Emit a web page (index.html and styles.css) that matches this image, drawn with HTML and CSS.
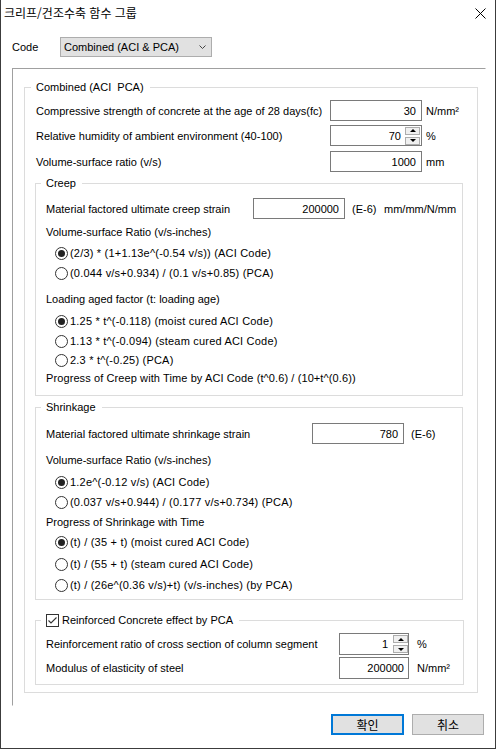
FILE: index.html
```html
<!DOCTYPE html>
<html lang="ko">
<head>
<meta charset="utf-8">
<title>크리프/건조수축 함수 그룹</title>
<link rel="stylesheet" href="styles.css">
</head>
<body>
<div class="window">
  <div class="titlebar">
    <span class="title">크리프/건조수축 함수 그룹</span>
    <svg class="close" width="11" height="11" viewBox="0 0 11 11"><path d="M0.5 0.5 L10.5 10.5 M10.5 0.5 L0.5 10.5" stroke="#000" stroke-width="1" fill="none"/></svg>
  </div>

  <div class="code-row">
    <span class="code-label">Code</span>
    <div class="select">
      <span>Combined (ACI &amp; PCA)</span>
      <svg width="7" height="4" viewBox="0 0 7 4"><polyline points="0.5,0.5 3.5,3.5 6.5,0.5" stroke="#444" stroke-width="1" fill="none"/></svg>
    </div>
  </div>

  <div class="panel">
    <fieldset class="grp combined">
      <legend>Combined (ACI&nbsp; PCA)</legend>

      <div class="row r-c1">
        <span class="lbl w294">Compressive strength of concrete at the age of 28 days(fc)</span>
        <div class="field w92"><span class="val">30</span></div>
        <span class="unit">N/mm²</span>
      </div>
      <div class="row r-c2">
        <span class="lbl w294">Relative humidity of ambient environment (40-100)</span>
        <div class="field w92 spinfield">
          <span class="val sv1">70</span>
          <div class="spin"><span class="sb up"></span><span class="sb down"></span></div>
        </div>
        <span class="unit">%</span>
      </div>
      <div class="row r-c3">
        <span class="lbl w294">Volume-surface ratio (v/s)</span>
        <div class="field w92"><span class="val">1000</span></div>
        <span class="unit">mm</span>
      </div>

      <fieldset class="grp sub creep">
        <legend>Creep</legend>
        <div class="row r-k1">
          <span class="lbl w207">Material factored ultimate creep strain</span>
          <div class="field w92"><span class="val">200000</span></div>
          <span class="unit u7 e6">(E-6)</span>
          <span class="unit">mm/mm/N/mm</span>
        </div>
        <div class="line m6">Volume-surface Ratio (v/s-inches)</div>
        <div class="radio m7"><span class="rb on"></span><span class="rt">(2/3) * (1+1.13e^(-0.54 v/s)) (ACI Code)</span></div>
        <div class="radio m6"><span class="rb"></span><span class="rt">(0.044 v/s+0.934) / (0.1 v/s+0.85) (PCA)</span></div>
        <div class="line m12">Loading aged factor (t: loading age)</div>
        <div class="radio m8"><span class="rb on"></span><span class="rt">1.25 * t^(-0.118) (moist cured ACI Code)</span></div>
        <div class="radio m6"><span class="rb"></span><span class="rt">1.13 * t^(-0.094) (steam cured ACI Code)</span></div>
        <div class="radio m5"><span class="rb"></span><span class="rt">2.3 * t^(-0.25) (PCA)</span></div>
        <div class="line m4 wide">Progress of Creep with Time by ACI Code (t^0.6) / (10+t^(0.6))</div>
      </fieldset>

      <fieldset class="grp sub shrink">
        <legend>Shrinkage</legend>
        <div class="row r-s1">
          <span class="lbl w266">Material factored ultimate shrinkage strain</span>
          <div class="field w92"><span class="val">780</span></div>
          <span class="unit u7">(E-6)</span>
        </div>
        <div class="line m9">Volume-surface Ratio (v/s-inches)</div>
        <div class="radio m8"><span class="rb on"></span><span class="rt">1.2e^(-0.12 v/s) (ACI Code)</span></div>
        <div class="radio m6"><span class="rb"></span><span class="rt">(0.037 v/s+0.944) / (0.177 v/s+0.734) (PCA)</span></div>
        <div class="line m6">Progress of Shrinkage with Time</div>
        <div class="radio m6"><span class="rb on"></span><span class="rt">(t) / (35 + t) (moist cured ACI Code)</span></div>
        <div class="radio m8"><span class="rb"></span><span class="rt">(t) / (55 + t) (steam cured ACI Code)</span></div>
        <div class="radio m7"><span class="rb"></span><span class="rt">(t) / (26e^(0.36 v/s)+t) (v/s-inches) (by PCA)</span></div>
      </fieldset>

      <fieldset class="grp sub rc">
        <legend><span class="cb"><svg width="11" height="11" viewBox="0 0 11 11"><polyline points="1.5,5.5 4,8 9.5,2.5" stroke="#333" stroke-width="1.1" fill="none"/></svg></span><span class="cbt">Reinforced Concrete effect by PCA</span></legend>
        <div class="row r-r1">
          <span class="lbl w293">Reinforcement ratio of cross section of column segment</span>
          <div class="field w70 spinfield rcspin">
            <span class="val sv2">1</span>
            <div class="spin"><span class="sb up"></span><span class="sb down"></span></div>
          </div>
          <span class="unit u8">%</span>
        </div>
        <div class="row r-r2">
          <span class="lbl w293">Modulus of elasticity of steel</span>
          <div class="field w70 f22 p4"><span class="val">200000</span></div>
          <span class="unit u8">N/mm²</span>
        </div>
      </fieldset>
    </fieldset>
  </div>

  <div class="buttons">
    <button class="btn primary">확인</button>
    <button class="btn b2">취소</button>
  </div>
</div>
</body>
</html>
```

FILE: styles.css
```css
* { box-sizing: border-box; }
html, body { margin: 0; padding: 0; background: #fff; }
body {
  width: 497px;
  height: 749px;
  overflow: hidden;
  font-family: "Liberation Sans", Arial, sans-serif;
  font-size: 11px;
  color: #000;
}

.window {
  width: 496px;
  height: 749px;
  border-left: 1px solid #3c3c3c;
  border-right: 1px solid #3c3c3c;
  border-bottom: 1px solid #3c3c3c;
  background: #fff;
  display: flex;
  flex-direction: column;
}

/* title bar */
.titlebar {
  height: 26px;
  flex: none;
  display: flex;
  align-items: center;
  justify-content: space-between;
  padding: 0 9px 0 3px;
}
.title {
  font-family: "Noto Sans CJK KR", sans-serif;
  font-size: 12px;
  line-height: 14px;
}
.close { display: block; }

/* code row */
.code-row {
  flex: none;
  display: flex;
  align-items: center;
  height: 20px;
  margin-top: 11px;
  padding-left: 11px;
}
.code-label { width: 48px; }
.select {
  width: 152px;
  height: 20px;
  background: #e1e1e1;
  border: 1px solid #adadad;
  display: flex;
  align-items: center;
  justify-content: space-between;
  padding: 0 5px 0 3px;
}
.select svg { display: block; }

/* panel */
.panel {
  flex: none;
  margin: 11px 0 0 11px;
  width: 474px;
  height: 638px;
  border-top: 1px solid #a0a0a0;
  border-left: 1px solid #a0a0a0;
  border-right: 1px solid #fff;
  border-bottom: 1px solid #fff;
  padding: 12px 0 0 11px;
}

/* group boxes */
.grp {
  margin: 0;
  min-width: 0;
  border: 1px solid #dcdcdc;
}
.grp > legend {
  height: 13px;
  line-height: 13px;
  margin-left: -5px;
  padding: 0 6px 0 5px;
  font-size: 11px;
}
.combined {
  width: 454px;
  padding: 6px 14px 7px 11px;
}
.sub { margin-left: -1px; width: 428px; }
.creep { margin-top: 5px; padding: 8px 0 10px 10px; }
.shrink { margin-top: 5px; padding: 9px 0 7px 10px; }
.rc { margin-top: 14px; width: 429px; padding: 6px 0 5px 10px; }

.rc > legend { display: flex; align-items: center; }
.cb {
  width: 13px;
  height: 13px;
  border: 1px solid #333;
  background: #fff;
  display: flex;
  align-items: center;
  justify-content: center;
}
.cb svg { display: block; }
.cbt { margin-left: 3px; }

/* rows */
.row { display: flex; align-items: center; }
.lbl { flex: none; white-space: nowrap; }
.w294 { width: 294px; }
.w207 { width: 207px; }
.w266 { width: 266px; }
.w293 { width: 293px; }

.r-c2 { margin-top: 4px; }
.r-c3 { margin-top: 5px; }
.r-r2 { margin-top: 2px; }

.field {
  flex: none;
  height: 21px;
  border: 1px solid #7a7a7a;
  background: #fff;
  display: flex;
  align-items: center;
  justify-content: flex-end;
  padding-right: 5px;
}
.w92 { width: 92px; }
.w70 { width: 70px; height: 22px; }
.p4 { padding-right: 4px; }

.spinfield { padding-right: 1px; }
.rcspin { padding-right: 0; }
.sv1 { margin-right: 4px; }
.sv2 { margin-right: 5px; }
.spin {
  width: 15px;
  display: flex;
  flex-direction: column;
  gap: 2px;
}
.sb {
  height: 8px;
  border: 1px solid #adadad;
  background: #f0f0f0;
  display: flex;
  align-items: center;
  justify-content: center;
}
.sb::after {
  content: "";
  width: 0;
  height: 0;
  border-left: 3px solid transparent;
  border-right: 3px solid transparent;
}
.sb.up::after { border-bottom: 3px solid #000; }
.sb.down::after { border-top: 3px solid #000; }

.unit { margin-left: 4px; white-space: nowrap; }
.u7 { margin-left: 7px; }
.u8 { margin-left: 8px; }
.e6 { width: 28px; }

.line { height: 14px; line-height: 14px; white-space: nowrap; }
.wide { letter-spacing: 0.1px; }
.radio {
  height: 14px;
  display: flex;
  align-items: center;
  padding-left: 9px;
  white-space: nowrap;
}
.rb {
  flex: none;
  width: 13px;
  height: 13px;
  border: 1px solid #333;
  border-radius: 50%;
  background: #fff;
  margin-right: 2px;
  display: flex;
  align-items: center;
  justify-content: center;
}
.rb.on::after {
  content: "";
  width: 7px;
  height: 7px;
  border-radius: 50%;
  background: #222;
}
.rt { letter-spacing: 0.2px; }

.m4 { margin-top: 4px; }
.m5 { margin-top: 5px; }
.m6 { margin-top: 6px; }
.m7 { margin-top: 7px; }
.m8 { margin-top: 8px; }
.m9 { margin-top: 9px; }
.m12 { margin-top: 12px; }

/* buttons */
.buttons {
  flex: none;
  display: flex;
  justify-content: flex-end;
  gap: 8px;
  margin-top: 8px;
  padding-right: 11px;
}
.btn {
  width: 73px;
  height: 21px;
  padding: 0;
  border: 1px solid #adadad;
  background: #e1e1e1;
  color: #000;
  font-family: "Noto Sans CJK KR", sans-serif;
  font-size: 12px;
  line-height: 17px;
}
.btn.b2 { width: 72px; }
.btn.primary { border: 2px solid #0078d7; }
```
